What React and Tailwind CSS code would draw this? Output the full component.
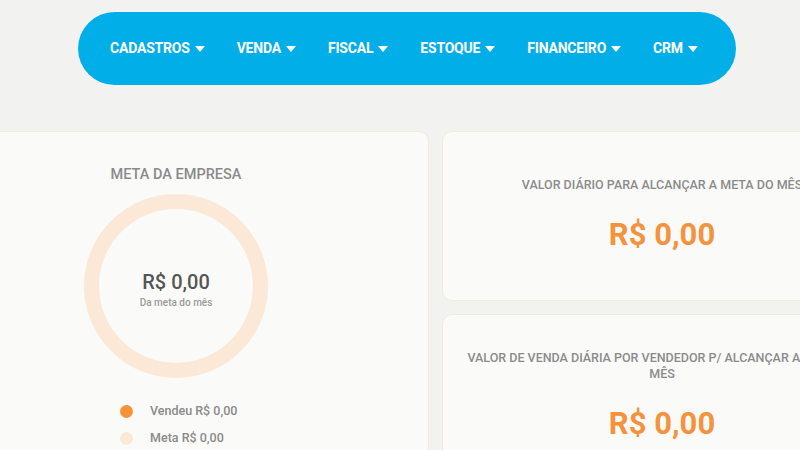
import React from 'react';

const menus = ['CADASTROS', 'VENDA', 'FISCAL', 'ESTOQUE', 'FINANCEIRO', 'CRM'];

function Caret() {
    return (
        <svg width="10" height="6" viewBox="0 0 10 6" className="ml-[5px]">
            <polygon points="0,0 10,0 5,6" fill="#ffffff" />
        </svg>
    );
}

function ValueCard({ title, className }) {
    return (
        <div className={`rounded-[10px] border border-[#f5e8d8] bg-[#fafbf9] px-4 flex flex-col items-center text-center ${className}`}>
            <p className="text-[12.5px] leading-4 font-medium text-[#8b8b8b]">{title}</p>
            <p className="text-[31px] font-bold text-[#f4923d] leading-none mt-[26px]">R$ 0,00</p>
        </div>
    );
}

export default function App() {
    return (
        <div className="w-[800px] h-[450px] overflow-hidden bg-[#f2f3f1] font-['Roboto',sans-serif]">
            {/* Menu */}
            <div className="pt-3 pl-[78px]">
                <nav className="w-[658px] h-[73px] rounded-full bg-[#02aee8] flex items-center pl-8 gap-8">
                    {menus.map((m) => (
                        <div key={m} className="flex items-center text-white text-[14px] font-bold tracking-[-0.2px]">
                            {m}
                            <Caret />
                        </div>
                    ))}
                </nav>
            </div>

            {/* Cards */}
            <div className="mt-[46px] -ml-3 flex gap-[13px]">
                {/* Meta da empresa */}
                <div className="w-[441px] h-[340px] shrink-0 rounded-[10px] border border-[#f5e8d8] bg-[#fafbf9] pl-[50px]">
                    <div className="w-[274px] flex flex-col items-center pt-[32px]">
                        <p className="text-[14.5px] font-medium text-[#8a8a8a]">META DA EMPRESA</p>
                        <div className="mt-[8px] w-[184px] h-[184px] rounded-full border-[15px] border-[#fbe8d6] flex flex-col items-center justify-center">
                            <p className="text-[20px] font-medium text-[#555555] leading-6 mt-[8px]">R$ 0,00</p>
                            <p className="text-[10px] font-medium text-[#9a9a9a] leading-3 mt-[3px]">Da meta do mês</p>
                        </div>
                        <div className="mt-[25px] self-start ml-[81px] flex flex-col gap-[10px]">
                            <div className="flex items-center gap-[17px] h-[17px]">
                                <span className="w-[13px] h-[13px] rounded-full bg-[#f6923a]" />
                                <span className="text-[12.5px] font-medium text-[#8a8a8a]">Vendeu R$ 0,00</span>
                            </div>
                            <div className="flex items-center gap-[17px] h-[17px]">
                                <span className="w-[13px] h-[13px] rounded-full bg-[#fbe8d6]" />
                                <span className="text-[12.5px] font-medium text-[#8a8a8a]">Meta R$ 0,00</span>
                            </div>
                        </div>
                    </div>
                </div>

                {/* Valores */}
                <div className="w-[440px] shrink-0 flex flex-col gap-[13px]">
                    <ValueCard className="h-[170px] pt-[45px]" title="VALOR DIÁRIO PARA ALCANÇAR A META DO MÊS" />
                    <ValueCard className="h-[170px] pt-[35px]" title="VALOR DE VENDA DIÁRIA POR VENDEDOR P/ ALCANÇAR A META DO MÊS" />
                </div>
            </div>
        </div>
    );
}
